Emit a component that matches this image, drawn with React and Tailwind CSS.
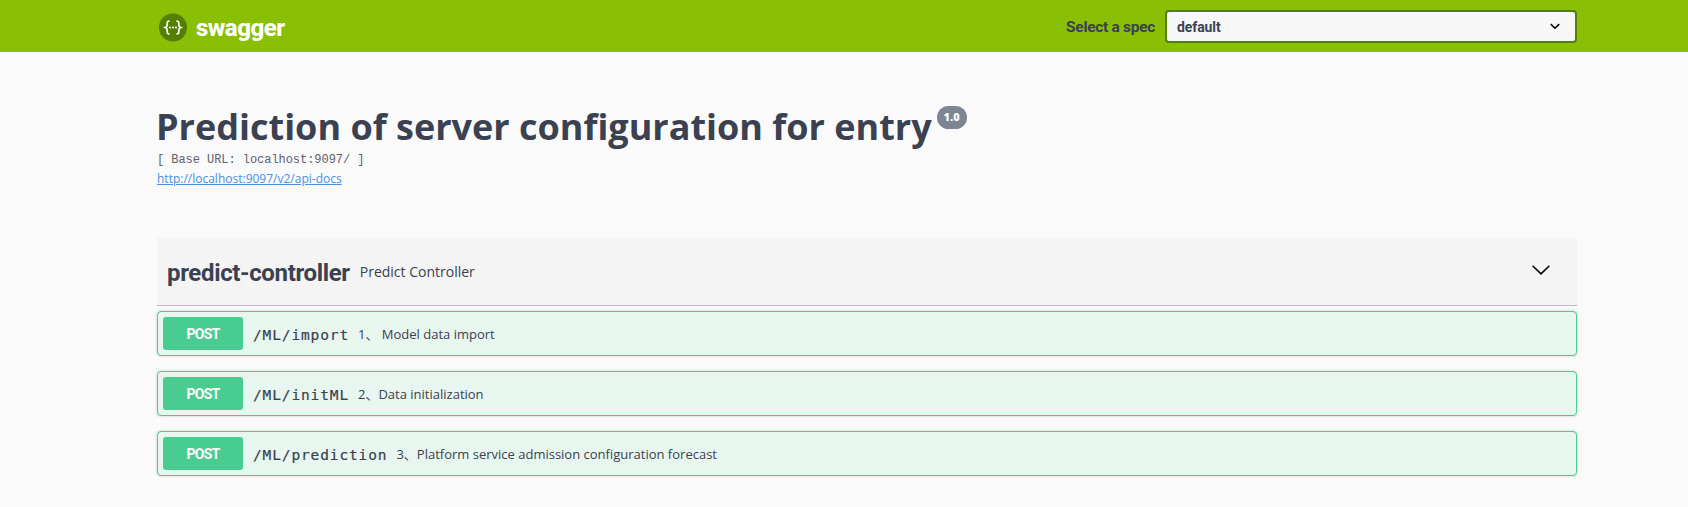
const operations = [
  { path: "/ML/import", summary: "1、 Model data import" },
  { path: "/ML/initML", summary: "2、Data initialization" },
  { path: "/ML/prediction", summary: "3、Platform service admission configuration forecast" },
];

function Logo() {
  return (
    <svg width="29" height="29" viewBox="0 0 29 29" fill="none">
      <circle cx="15" cy="14.5" r="14" fill="#547f00" />
      <g stroke="#fff" strokeWidth="1.7">
        <path d="M11.500 8.200h-.8c-1 0-1.500.6-1.500 1.700v2c0 1.300-.6 2.100-2 2.600 1.400.5 2 1.300 2 2.600v2c0 1.100.5 1.700 1.500 1.700h.8" />
        <path d="M18.500 8.200h.8c1 0 1.500.6 1.500 1.700v2c0 1.300.6 2.100 2 2.600-1.400.5-2 1.300-2 2.600v2c0 1.100-.5 1.700-1.500 1.700h-.8" />
      </g>
      <g fill="#fff">
        <circle cx="12" cy="14.500" r="1.050" />
        <circle cx="15" cy="14.500" r="1.050" />
        <circle cx="18" cy="14.500" r="1.050" />
      </g>
    </svg>
  );
}

function Topbar() {
  return (
    <header className="flex h-[52px] items-center justify-between bg-[#89bf04] pr-[111px] pl-[158px]">
      <div className="flex items-center pt-[2px]">
        <Logo />
        <span className="ml-[9px] pt-px font-['Roboto',sans-serif] text-[24px] leading-[28px] font-extrabold tracking-[-0.5px] text-white">swagger</span>
      </div>
      <div className="flex items-center">
        <span className="mr-[10px] pt-[2px] font-['Roboto',sans-serif] text-[15.5px] leading-5 font-bold tracking-[-0.3px] text-[#3b4151]">Select a spec</span>
        <div className="flex h-[33px] w-[412px] items-center justify-between rounded-[4px] border-2 border-[#547f00] bg-[#f7f7f7] pr-[15px] pl-[10px]">
          <span className="pt-[2px] font-['Roboto',sans-serif] text-[14px] leading-5 font-bold tracking-[-0.1px] text-[#3b4151]">default</span>
          <svg width="10" height="7" viewBox="0 0 10 7" fill="none" stroke="#000" strokeWidth="1.600">
            <path d="M.8 1.100 5 5.200l4.200-4.100" />
          </svg>
        </div>
      </div>
    </header>
  );
}

function Operation({ path, summary }) {
  return (
    <div className="flex h-[45px] items-center rounded-[4px] border border-[#49cc90] bg-[#e8f6f0] p-[5px] text-[#3b4151] shadow-[0_0_3px_rgba(0,0,0,0.19)]">
      <span className="flex h-[33px] w-[80px] items-center justify-center rounded-[3px] bg-[#49cc90] pt-px font-['Roboto',sans-serif] text-[14px] font-bold tracking-[-0.8px] text-white">POST</span>
      <span className="ml-[10px] pt-[2px] font-['DejaVu_Sans_Mono',monospace] text-[14.5px] leading-5 tracking-[0.87px] [-webkit-text-stroke:0.2px_#3b4151]">{path}</span>
      <span className="ml-[9px] font-['Open_Sans','Noto_Sans_CJK_SC',sans-serif] text-[13px] leading-5">{summary}</span>
    </div>
  );
}

export default function App() {
  return (
    <div className="min-h-[507px] bg-[#fafafa] font-['Open_Sans',sans-serif] text-[#3b4151]">
      <Topbar />
      <main className="pr-[111px] pl-[157px]">
        <section className="h-[186px] pt-[50px]">
          <div className="flex items-start">
            <h1 className="-ml-px text-[36px] leading-[49px] font-bold whitespace-nowrap">Prediction of server configuration for entry</h1>
            <span className="mt-[4px] ml-[5px] flex h-[23px] w-[30px] items-center justify-center rounded-full bg-[#7d8492] text-[11px] font-extrabold text-white">1.0</span>
          </div>
          <pre className="pt-px font-['Liberation_Mono',monospace] text-[12px] leading-[16px] tracking-[-0.05px] text-[#5c6170]">[ Base URL: localhost:9097/ ]</pre>
          <a className="mt-[2px] block text-[12px] leading-[18px] text-[#4990e2] underline" href="#docs">http://localhost:9097/v2/api-docs</a>
        </section>
        <section>
          <div className="flex h-[68px] items-center border-b border-[#bbbcc0] bg-[#f4f4f4] pr-[27px] pl-[10px]">
            <h2 className="pt-[3px] font-['Roboto',sans-serif] text-[24px] leading-7 font-bold tracking-[-0.35px]">predict-controller</h2>
            <span className="ml-[10px] flex-1 text-[14px] leading-5">Predict Controller</span>
            <svg className="mb-[3px]" width="18" height="10" viewBox="0 0 18 10" fill="none" stroke="#000" strokeWidth="1.500">
              <path d="M.6.8 9 8.900 17.400.8" />
            </svg>
          </div>
          <div className="mt-[5px] flex flex-col gap-[15px]">
            {operations.map((operation) => (
              <Operation key={operation.path} {...operation} />
            ))}
          </div>
        </section>
      </main>
    </div>
  );
}
